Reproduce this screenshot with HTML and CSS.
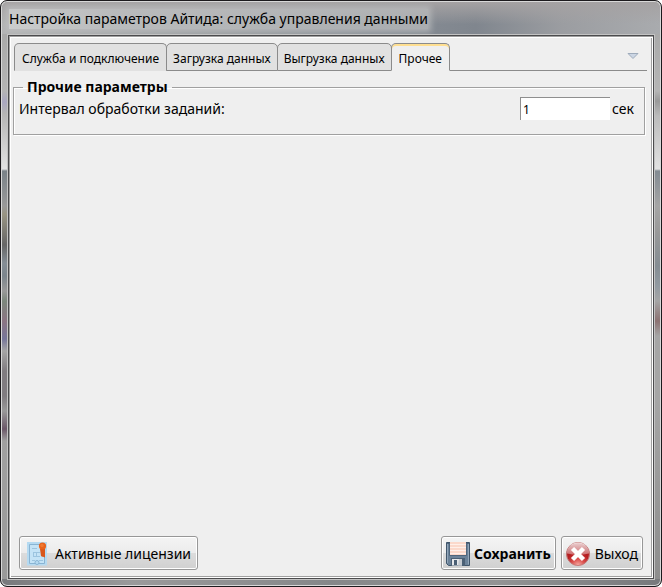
FILE: index.html
```html
<!DOCTYPE html>
<html lang="ru">
<head>
<meta charset="utf-8">
<title>Настройка параметров Айтида: служба управления данными</title>
<link rel="stylesheet" href="styles.css">
</head>
<body>
<main class="window">
  <header class="titlebar"><h1 class="title">Настройка параметров Айтида: служба управления данными</h1></header>
  <div class="client">
    <nav class="tabs" role="tablist">
      <button class="tab" role="tab" type="button">Служба и подключение</button>
      <button class="tab" role="tab" type="button">Загрузка данных</button>
      <button class="tab" role="tab" type="button">Выгрузка данных</button>
      <button class="tab active" role="tab" type="button" aria-selected="true">Прочее</button>
      <span class="tab-rest">
        <button class="tab-menu" type="button" aria-label="Список вкладок">
          <svg width="12" height="7" viewBox="0 0 12 7"><path d="M1 .5H11L6 5.5Z" fill="#ccd6e4" stroke="#9eabbb"/></svg>
        </button>
      </span>
    </nav>
    <fieldset class="group">
      <legend>Прочие параметры</legend>
      <div class="row">
        <label for="interval">Интервал обработки заданий:</label>
        <span class="value"><input id="interval" type="text" value="1"><span>сек</span></span>
      </div>
    </fieldset>
    <footer class="actions">
      <button class="btn licenses" type="button">
        <svg width="24" height="24" viewBox="0 0 24 24">
          <rect x="1" width="20" height="23.500" fill="#b5daf1"/>
          <path d="M3.500 2.500H18.500V21.500H3.500Z" fill="#c4e3f6" stroke="#89b4d3"/>
          <path d="M6 6.500H11M6 18.500H9M13 18.500H17M7 10.500H14M7 14.500H14M7.500 10V15M10.500 10V15" stroke="#9cc4df" fill="none"/>
          <circle cx="11" cy="20.500" r="2" fill="#b5daf1" stroke="#89b4d3"/>
          <path d="M14 7H16.500V15L15 14ZM16.500 7H19V15.500L16.500 14.500Z" fill="#d9571b"/>
          <circle cx="16.500" cy="4" r="3.600" fill="#e8631c"/>
          <circle cx="16" cy="3.500" r="1.800" fill="#f07a32"/>
        </svg>
        <span>Активные лицензии</span>
      </button>
      <button class="btn primary" type="button">
        <svg width="24" height="24" viewBox="0 0 24 24">
          <path d="M.5 .5H23.500V23.500H2.500L.5 21.500Z" fill="#6b8299" stroke="#41566b"/>
          <path d="M1.500 1.500V21M22.500 1.500V22.500" stroke="#92a6b9"/>
          <rect x="4" width="16" height="13" fill="#fbd9cb"/>
          <path d="M4 2.500H20M4 5.500H20M4 8.500H20M4 11.500H20" stroke="#fff0e9"/>
          <path d="M3.500 1V13.500H20.500V1" fill="none" stroke="#50667c"/>
          <path d="M1.500 1.500H2.500M21.500 1.500H22.500" stroke="#2f4256"/>
          <rect x="5" y="16" width="14" height="8" fill="#4b6075"/>
          <rect x="6" y="17" width="10" height="6.500" fill="#e6e8eb"/>
          <rect x="8" y="18" width="3" height="5" fill="#4b6075"/>
          <path d="M13 17H16V23.500H12Z" fill="#c5cad0"/>
        </svg>
        <span>Сохранить</span>
      </button>
      <button class="btn" type="button">
        <svg width="24" height="24" viewBox="0 0 24 24">
          <defs>
            <radialGradient id="ball" cx=".5" cy="1" r=".9"><stop offset="0" stop-color="#f9b0a8"/><stop offset=".3" stop-color="#dc5350"/><stop offset=".6" stop-color="#b81f22"/><stop offset="1" stop-color="#a51c20"/></radialGradient>
            <linearGradient id="shine" x2="0" y2="1"><stop offset="0" stop-color="#fff" stop-opacity=".8"/><stop offset="1" stop-color="#fff" stop-opacity=".35"/></linearGradient>
          </defs>
          <circle cx="12" cy="12" r="11.500" fill="url(#ball)" stroke="#c47a79"/>
          <path d="M1 11.500A11 11 0 0 1 23 11.500Q12 14 1 11.500Z" fill="url(#shine)"/>
          <path d="M6.500 6.500L17.500 17.500M17.500 6.500L6.500 17.500" stroke="#fff" stroke-width="4.500"/>
        </svg>
        <span>Выход</span>
      </button>
    </footer>
  </div>
</main>
</body>
</html>
```
FILE: styles.css
```css
* { box-sizing: border-box; }
html { background: #fff; }
body {
  margin: 0;
  color: #000;
  font: 14px/20px "Noto Sans", "Segoe UI", sans-serif;
}
button, input { font: inherit; color: inherit; }
.window {
  min-height: 100vh;
  display: flex;
  flex-direction: column;
  padding: 0 7px 7px;
  border: 1px solid #1c1a1d;
  border-radius: 7px;
  box-shadow: inset 0 0 0 1px #d8d8d8;
  background:
    linear-gradient(90deg, #77797c, #9a9a9b 20%, #858789 50%, #929394 75%, #77797c) bottom / 100% 7px no-repeat,
    linear-gradient(#aaa 35px, #b4b4b4 90px, #a9a7c0 101px, #b4b4b4 112px, #e2e2e2 168px, #7a8288 170px, #999 205px, #999584 213px, #666 244px, #858d95 262px, #7c858c 275px, #999 290px, #7c877c 300px, #8b7583 320px, #77779a 338px, #a5a5a5 350px, #807c80 370px, #807c80 395px, #999 410px, #6b5868 428px, #a0a0a0 440px, #999) left / 50% 100% no-repeat,
    linear-gradient(#aaa 35px, #b5b5b5 90px, #999 100px, #bbb 115px, #e2e2e2 168px, #838b93 170px, #a5a5a5 205px, #999 230px, #858d93 265px, #929aa1 285px, #a5a5a5 300px, #8c7272 320px, #a5a5a5 335px, #a5a5a5 400px, #8c8c8c) right / 50% 100% no-repeat;
}
.titlebar {
  height: 32px;
  margin: 1px -6px 1px;
  padding: 7px 7px 0;
  border-radius: 6px 6px 0 0;
  overflow: hidden;
  background:
    linear-gradient(#a5a2a3, #a5a2a300 70%),
    linear-gradient(90deg, #b2b3b4, #9b9ea1 30%, #868c94 60%, #80868e 72%, #9b9da1 85%, #a9abae);
}
.title {
  display: inline-block;
  margin: 0;
  font-size: 14px;
  line-height: 20px;
  font-weight: 400;
  background: linear-gradient(90deg, #d6d8d8b3, #c2c4c5b3 25%, #babcbdb3);
  box-shadow: 0 0 6px 3px #c0c2c3b3;
}
.client {
  flex: 1;
  display: flex;
  flex-direction: column;
  padding: 7px 6px 8px 3px;
  border: 1px solid #4b4b4d;
  outline: 1px solid #c3c3c3;
  box-shadow: inset 1px 1px #a0a0a0, inset 2px 2px #fff, inset -1px -1px #fff, inset -2px -2px #a0a0a0;
  background: #efefef;
}
.tabs { display: flex; padding-left: 2px; }
.tab {
  height: 28px;
  padding: 3px 6px 0;
  margin-right: -1px;
  border: 1px solid #8b8b8b;
  border-radius: 5px 5px 0 0;
  background: #e1e1e1;
  font-size: 12px;
  line-height: 20px;
  white-space: nowrap;
}
.tab:first-child { padding: 3px 7px 0; border-bottom-color: #e1e1e1; }
.tab.active {
  margin-right: 0;
  padding: 3px 7px 0;
  border-bottom-color: #efefef;
  background: #efefef;
  box-shadow: inset 0 2px #ffdf91;
}
.tab-rest {
  flex: 1;
  display: flex;
  justify-content: flex-end;
  align-items: center;
  padding-right: 8px;
  border-bottom: 1px solid #8b8b8b;
}
.tab-menu { display: flex; padding: 0; border: 0; background: none; }
.group {
  margin: 6px 2px 0 1px;
  padding: 0 10px 14px 5px;
  border: 1px solid #a0a0a0;
  box-shadow: 1px 1px #fff, inset 1px 1px #fff;
}
.group legend { margin-left: 4px; padding: 0 4px; font-weight: 700; }
.row { display: flex; justify-content: space-between; align-items: center; }
.value { display: flex; align-items: center; gap: 2px; }
.value input {
  width: 90px;
  height: 23px;
  padding: 0 2px;
  border: 0 solid #8f8f8f;
  border-width: 1px 0 0 1px;
  background: #fff;
  font-size: 12px;
}
.actions { display: flex; gap: 5px; margin-top: auto; padding: 0 4px 0 7px; }
.btn {
  height: 34px;
  display: flex;
  align-items: center;
  gap: 5px;
  padding: 1px 4px 0;
  border: 1px solid #979797;
  border-radius: 3px;
  box-shadow: inset 0 0 0 1px #fff;
  background: linear-gradient(#f4f4f4, #ececec 50%, #dcdcdc 50%, #d0d0d0);
  white-space: nowrap;
}
.licenses { margin-right: auto; padding: 1px 6px 0; gap: 5px; }
.primary { gap: 4px; font-weight: 700; }
```
